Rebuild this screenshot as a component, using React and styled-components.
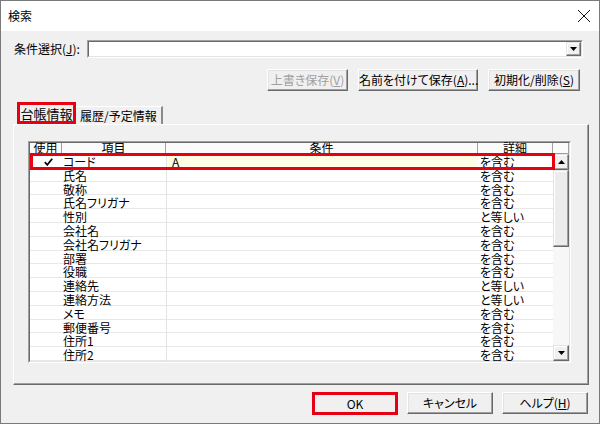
import React from 'react';
import styled, { createGlobalStyle } from 'styled-components';

const FONT = `"Noto Sans CJK JP", "Liberation Sans", sans-serif`;
const RED = '#e60012';

const Global = createGlobalStyle`
  html, body { margin: 0; padding: 0; background: #fff; }
  body { width: 600px; height: 424px; overflow: hidden; font-family: ${FONT}; font-size: 12px; color: #000; }
  * { box-sizing: border-box; }
`;

const Window = styled.div`
  width: 600px;
  height: 424px;
  border: 1px solid #7a7a7a;
  background: #f0f0f0;
  display: flex;
  flex-direction: column;
  font-feature-settings: "palt";
  line-height: 1;
`;

const TitleBar = styled.div`
  height: 30px;
  flex-shrink: 0;
  background: #fff;
  display: flex;
  align-items: center;
  justify-content: space-between;
  padding: 0 8px 0 7px;
  font-size: 12px;
`;

const Body = styled.div`
  flex: 1;
  display: flex;
  flex-direction: column;
  padding: 9px 10px 0 12px;
`;

const ComboRow = styled.div`
  display: flex;
  align-items: center;
  height: 18px;
`;

const Label = styled.label`
  width: 74px;
  padding-left: 1px;
  flex-shrink: 0;
  white-space: nowrap;
`;

const Combo = styled.div`
  flex: 1;
  height: 18px;
  margin-right: 6px;
  border: 1px solid;
  border-color: #a0a0a0 #fff #fff #a0a0a0;
  display: flex;
`;

const ComboInner = styled.div`
  flex: 1;
  background: #fff;
  border: 1px solid;
  border-color: #696969 #e3e3e3 #e3e3e3 #696969;
  display: flex;
  justify-content: flex-end;
`;

const ArrowButton = styled.div`
  width: ${p => p.$w || 15}px;
  height: ${p => p.$h || 14}px;
  background: #f0f0f0;
  border: 1px solid;
  border-color: #e3e3e3 #696969 #696969 #e3e3e3;
  box-shadow: inset -1px -1px 0 #a0a0a0, inset 1px 1px 0 #fff;
  display: flex;
  align-items: center;
  justify-content: center;
  flex-shrink: 0;
`;

const ButtonRow = styled.div`
  display: flex;
  justify-content: flex-end;
  gap: ${p => p.$gap}px;
  margin-top: ${p => p.$top}px;
  margin-right: ${p => p.$right}px;
`;

const Button = styled.button`
  font-family: ${FONT};
  font-size: 12px;
  font-weight: normal;
  font-feature-settings: "palt";
  width: ${p => p.$w}px;
  height: ${p => p.$h || 22}px;
  padding: 0;
  background: #f0f0f0;
  color: ${p => (p.disabled ? '#a0a0a0' : '#000')};
  border: 1px solid;
  border-color: #fff #696969 #696969 #fff;
  box-shadow: inset -1px -1px 0 #a0a0a0, inset 1px 1px 0 #e3e3e3;
  white-space: nowrap;
  line-height: 1;
  ${p => p.$marked && `
    border: 3px solid ${RED};
    box-shadow: none;
  `}
  u { text-decoration-thickness: 1px; text-underline-offset: 1px; }
`;

const TabStrip = styled.div`
  display: flex;
  align-items: flex-end;
  height: 22px;
  margin-top: 11px;
  padding-left: 4px;
  position: relative;
  z-index: 1;
`;

const Tab = styled.div`
  height: ${p => (p.$active ? 22 : 18)}px;
  padding: 0 ${p => (p.$active ? 3 : 4)}px;
  display: flex;
  align-items: center;
  justify-content: center;
  font-size: 12px;
  background: #f0f0f0;
  white-space: nowrap;
  border-top: 1px solid #fff;
  border-right: 2px solid #8a8a8a;
  ${p => p.$active && `
    width: 59px;
    border: 3px solid ${RED};
    font-size: 13px;
  `}
`;

const Panel = styled.div`
  height: 261px;
  border: 1px solid;
  border-color: #fff #696969 #696969 #fff;
  box-shadow: inset -1px -1px 0 #a0a0a0;
  padding: 16px 16px 0 14px;
`;

const Grid = styled.div`
  width: 543px;
  height: 222px;
  border: 1px solid;
  border-color: #a0a0a0 #fff #fff #a0a0a0;
`;

const GridInner = styled.div`
  position: relative;
  height: 100%;
  border: 1px solid;
  border-color: #696969 #e3e3e3 #e3e3e3 #696969;
  background: #fff;
  display: flex;
  flex-direction: column;
`;

const COLS = '32px 104px 312px 75px 16px';
const ROWCOLS = '32px 104px 312px 75px';

const HeaderRow = styled.div`
  display: grid;
  grid-template-columns: ${COLS};
  height: 11px;
  flex-shrink: 0;
  background: #fbfbfb;
`;

const HeaderCell = styled.div`
  border-right: 1px solid #a0a0a0;
  border-bottom: 1px solid #a0a0a0;
  font-size: 12px;
  line-height: 10px;
  text-align: center;
  white-space: nowrap;
`;

const GridBody = styled.div`
  flex: 1;
  display: flex;
  overflow: hidden;
`;

const Rows = styled.div`
  width: 523px;
  display: flex;
  flex-direction: column;
`;

const Row = styled.div`
  display: grid;
  grid-template-columns: ${ROWCOLS};
  height: 13.8px;
  flex-shrink: 0;
  box-shadow: inset 0 -1px 0 #e8e8e8;
`;

const Cell = styled.div`
  font-size: 12px;
  line-height: 13.8px;
  padding-left: ${p => p.$pad || 0}px;
  padding-top: 1px;
  white-space: nowrap;
  display: flex;
  align-items: center;
  justify-content: ${p => (p.$center ? 'center' : 'flex-start')};
  background: ${p => (p.$yellow ? '#fefee4' : 'transparent')};
  ${p => p.$divider && 'border-left: 1px solid #e4e4e4;'}
`;

const RowMark = styled.div`
  position: absolute;
  left: 0;
  top: 10px;
  width: 525px;
  height: 17px;
  border: 3px solid ${RED};
  z-index: 2;
  pointer-events: none;
`;

const ScrollBar = styled.div`
  width: 16px;
  display: flex;
  flex-direction: column;
  background: #f7f7f7;
`;

const Thumb = styled.div`
  height: 77px;
  background: #ececec;
  border: 1px solid;
  border-color: #e3e3e3 #696969 #696969 #e3e3e3;
  box-shadow: inset -1px -1px 0 #a0a0a0, inset 1px 1px 0 #fff;
`;

const Track = styled.div`
  flex: 1;
`;

const Caret = ({ up }) => (
  <svg width="7" height="4" viewBox="0 0 7 4">
    <path d={up ? 'M0 4 L3.5 0 L7 4 Z' : 'M0 0 L7 0 L3.5 4 Z'} fill="#000" />
  </svg>
);

const Close = () => (
  <svg width="14" height="14" viewBox="0 0 14 14">
    <path d="M1 1 L13 13 M13 1 L1 13" stroke="#111" strokeWidth="1" fill="none" />
  </svg>
);

const Check = () => (
  <svg width="9" height="8" viewBox="0 0 9 8" style={{ marginLeft: 4 }}>
    <path d="M0.8 4.2 L3.3 6.8 L8.2 0.8" fill="none" stroke="#000" strokeWidth="1.8" />
  </svg>
);

const rows = [
  ['コード', 'を含む'],
  ['氏名', 'を含む'],
  ['敬称', 'を含む'],
  ['氏名フリガナ', 'を含む'],
  ['性別', 'と等しい'],
  ['会社名', 'を含む'],
  ['会社名フリガナ', 'を含む'],
  ['部署', 'を含む'],
  ['役職', 'を含む'],
  ['連絡先', 'と等しい'],
  ['連絡方法', 'と等しい'],
  ['メモ', 'を含む'],
  ['郵便番号', 'を含む'],
  ['住所1', 'を含む'],
  ['住所2', 'を含む'],
];

export default function App() {
  return (
    <>
      <Global />
      <Window>
        <TitleBar>
          <span>検索</span>
          <Close />
        </TitleBar>
        <Body>
          <ComboRow>
            <Label>条件選択(<u>J</u>):</Label>
            <Combo>
              <ComboInner>
                <ArrowButton>
                  <Caret />
                </ArrowButton>
              </ComboInner>
            </Combo>
          </ComboRow>
          <ButtonRow $gap={10} $top={11} $right={9}>
            <Button $w={81} disabled>上書き保存(<u>V</u>)</Button>
            <Button $w={120}>名前を付けて保存(<u>A</u>)...</Button>
            <Button $w={92}>初期化/削除(<u>S</u>)</Button>
          </ButtonRow>
          <TabStrip>
            <Tab $active>台帳情報</Tab>
            <Tab>履歴/予定情報</Tab>
          </TabStrip>
          <Panel>
            <Grid>
              <GridInner>
                <HeaderRow>
                  <HeaderCell>使用</HeaderCell>
                  <HeaderCell>項目</HeaderCell>
                  <HeaderCell>条件</HeaderCell>
                  <HeaderCell>詳細</HeaderCell>
                  <HeaderCell />
                </HeaderRow>
                <GridBody>
                  <Rows>
                    {rows.map(([item, detail], i) => (
                      <Row key={item}>
                        <Cell $center>{i === 0 ? <Check /> : null}</Cell>
                        <Cell $pad={1}>{item}</Cell>
                        <Cell $pad={5} $divider $yellow={i === 0}>
                          {i === 0 ? 'A' : ''}
                        </Cell>
                        <Cell $pad={2}>{detail}</Cell>
                      </Row>
                    ))}
                  </Rows>
                  <ScrollBar>
                    <ArrowButton $w={16} $h={16}>
                      <Caret up />
                    </ArrowButton>
                    <Thumb />
                    <Track />
                    <ArrowButton $w={16} $h={16}>
                      <Caret />
                    </ArrowButton>
                  </ScrollBar>
                </GridBody>
                <RowMark />
              </GridInner>
            </Grid>
          </Panel>
          <ButtonRow $gap={9} $top={7} $right={1}>
            <Button $w={86} $h={23} $marked>OK</Button>
            <Button $w={86} $h={22}>キャンセル</Button>
            <Button $w={86} $h={22}>ヘルプ(<u>H</u>)</Button>
          </ButtonRow>
        </Body>
      </Window>
    </>
  );
}
